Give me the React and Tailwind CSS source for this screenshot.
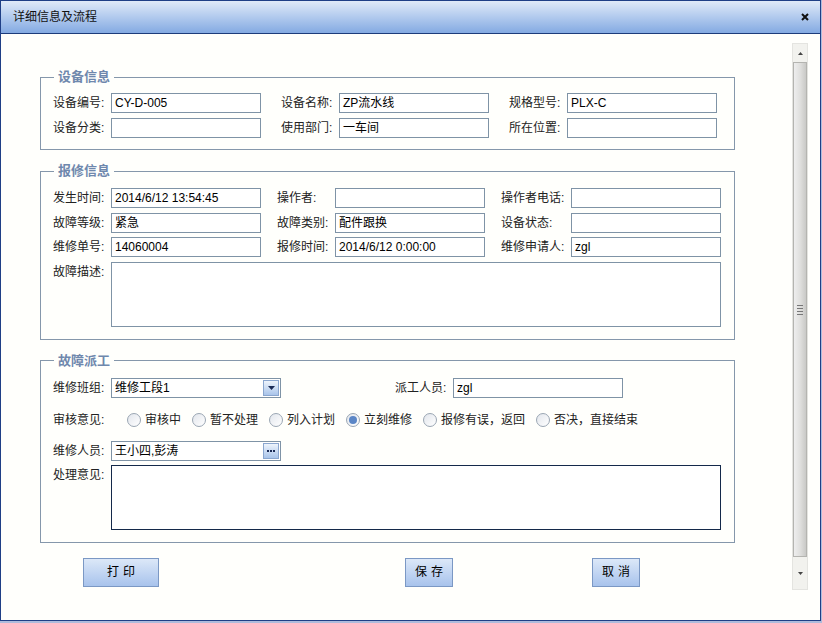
import React from 'react'

const font = { fontFamily: '"Liberation Sans","Noto Sans CJK SC",sans-serif' }

function Label({ w, children }) {
  return <div className={`shrink-0 text-[12px] text-[#222] leading-[20px]`} style={{ width: w }}>{children}</div>
}

function Input({ value = '', w = 150 }) {
  return (
    <div className="h-[20px] border border-[#7f93a6] bg-white px-[3px] text-[12px] leading-[18px] text-black shrink-0" style={{ width: w }}>
      {value}
    </div>
  )
}

function Field({ label, lw, value, iw }) {
  return (
    <div className="flex items-center">
      <Label w={lw}>{label}</Label>
      <Input value={value} w={iw} />
    </div>
  )
}

function Section({ title, children, className = '' }) {
  return (
    <fieldset className={`w-[695px] border border-[#8597ab] pl-[12px] ${className}`}>
      <legend className="ml-[1px] px-[4px] text-[13px] leading-[16px] font-bold text-[#6f88ad]">{title}</legend>
      {children}
    </fieldset>
  )
}

function Combo({ value, dots }) {
  return (
    <div className="flex h-[20px] w-[170px] border border-[#7f93a6] bg-white">
      <div className="flex-1 px-[3px] text-[12px] leading-[18px] text-black">{value}</div>
      <div className="m-[1px] flex h-[16px] w-[16px] items-center justify-center border border-[#8aa6cf] bg-gradient-to-b from-[#eef4fc] to-[#a9c4ea]">
        {dots ? (
          <div className="flex gap-[1px]">
            <span className="h-[2px] w-[2px] bg-[#1a2a55]" />
            <span className="h-[2px] w-[2px] bg-[#1a2a55]" />
            <span className="h-[2px] w-[2px] bg-[#1a2a55]" />
          </div>
        ) : (
          <svg width="7" height="4" viewBox="0 0 7 4"><path d="M0 0h7L3.5 4z" fill="#1a2a55" /></svg>
        )}
      </div>
    </div>
  )
}

function Radio({ label, checked }) {
  return (
    <div className="flex items-center gap-[4px] mr-[11px]">
      <div className="flex h-[14px] w-[14px] items-center justify-center rounded-full border border-[#9aa6b3] bg-gradient-to-br from-[#e2e6ec] to-white">
        {checked && <div className="h-[8px] w-[8px] rounded-full bg-[#5b86c6]" />}
      </div>
      <span className="text-[12px] text-[#222]">{label}</span>
    </div>
  )
}

function Btn({ children, w }) {
  return (
    <div className="flex h-[29px] items-center justify-center border border-[#7b98c4] bg-gradient-to-b from-[#dce8f8] to-[#a8c3ec] text-[12px] tracking-[4px] text-black pl-[4px]" style={{ width: w }}>
      {children}
    </div>
  )
}

export default function App() {
  return (
    <div className="h-[623px] w-[822px] bg-[#aebbdc]" style={font}>
      <div className="flex h-[621px] w-[821px] flex-col border border-[#1f3f86] bg-[#fffffc]">
        <div className="flex h-[33px] items-center justify-between border-b border-[#1c3b7a] bg-gradient-to-b from-[#e0eaf8] to-[#84aae2] pl-[12px] pr-[11px]">
          <span className="text-[12px] text-[#111]">详细信息及流程</span>
          <svg width="8" height="8" viewBox="0 0 8 8"><path d="M1 1l6 6M7 1L1 7" stroke="#111" strokeWidth="2" /></svg>
        </div>
        <div className="flex flex-1">
          <div className="flex-1 pl-[39px] pt-[35px]">
            <Section title="设备信息" className="pb-[11px]">
              <div className="flex flex-col gap-[5px] pt-[8px]">
                <div className="flex gap-[20px]">
                  <Field label="设备编号:" lw={58} value="CY-D-005" iw={150} />
                  <Field label="设备名称:" lw={58} value="ZP流水线" iw={150} />
                  <Field label="规格型号:" lw={58} value="PLX-C" iw={150} />
                </div>
                <div className="flex gap-[20px]">
                  <Field label="设备分类:" lw={58} value="" iw={150} />
                  <Field label="使用部门:" lw={58} value="一车间" iw={150} />
                  <Field label="所在位置:" lw={58} value="" iw={150} />
                </div>
              </div>
            </Section>
            <Section title="报修信息" className="mt-[13px] pb-[12px]">
              <div className="flex flex-col gap-[4.5px] pt-[9px]">
                <div className="flex gap-[16px]">
                  <Field label="发生时间:" lw={58} value="2014/6/12 13:54:45" iw={150} />
                  <Field label="操作者:" lw={58} value="" iw={150} />
                  <Field label="操作者电话:" lw={70} value="" iw={150} />
                </div>
                <div className="flex gap-[16px]">
                  <Field label="故障等级:" lw={58} value="紧急" iw={150} />
                  <Field label="故障类别:" lw={58} value="配件跟换" iw={150} />
                  <Field label="设备状态:" lw={70} value="" iw={150} />
                </div>
                <div className="flex gap-[16px]">
                  <Field label="维修单号:" lw={58} value="14060004" iw={150} />
                  <Field label="报修时间:" lw={58} value="2014/6/12 0:00:00" iw={150} />
                  <Field label="维修申请人:" lw={70} value="zgl" iw={150} />
                </div>
                <div className="flex">
                  <Label w={58}>故障描述:</Label>
                  <div className="h-[65px] w-[610px] border border-[#7f93a6] bg-white" />
                </div>
              </div>
            </Section>
            <Section title="故障派工" className="mt-[13px] pb-[12px]">
              <div className="flex flex-col pt-[9px]">
                <div className="flex items-center">
                  <Label w={58}>维修班组:</Label>
                  <Combo value="维修工段1" />
                  <div className="ml-[114px] flex items-center">
                    <Label w={58}>派工人员:</Label>
                    <Input value="zgl" w={170} />
                  </div>
                </div>
                <div className="flex h-[43px] items-center pt-[2px]">
                  <Label w={74}>审核意见:</Label>
                  <Radio label="审核中" />
                  <Radio label="暂不处理" />
                  <Radio label="列入计划" />
                  <Radio label="立刻维修" checked />
                  <Radio label="报修有误，返回" />
                  <Radio label="否决，直接结束" />
                </div>
                <div className="flex items-center">
                  <Label w={58}>维修人员:</Label>
                  <Combo value="王小四,彭涛" dots />
                </div>
                <div className="mt-[4px] flex">
                  <Label w={58}>处理意见:</Label>
                  <div className="h-[65px] w-[610px] border border-[#14294a] bg-white" />
                </div>
              </div>
            </Section>
            <div className="mt-[15px] flex">
              <div className="ml-[43px]"><Btn w={76}>打印</Btn></div>
              <div className="ml-[246px]"><Btn w={48}>保存</Btn></div>
              <div className="ml-[139px]"><Btn w={48}>取消</Btn></div>
            </div>
          </div>
          <div className="mr-[12px] mt-[9px] flex h-[547px] w-[16px] flex-col border border-[#e4e4e0] bg-[#f2f2ee]">
            <div className="flex h-[18px] items-center justify-center">
              <svg width="5" height="3" viewBox="0 0 5 3"><path d="M0 3h5L2.5 0z" fill="#444" /></svg>
            </div>
            <div className="flex flex-1 items-center justify-center border border-[#b4b4b0] bg-gradient-to-r from-[#eeeeee] via-[#e0e0de] to-[#c9c9c6]">
              <div className="flex flex-col gap-[2px]">
                <span className="h-px w-[6px] bg-[#777]" />
                <span className="h-px w-[6px] bg-[#777]" />
                <span className="h-px w-[6px] bg-[#777]" />
                <span className="h-px w-[6px] bg-[#777]" />
              </div>
            </div>
            <div className="flex h-[32px] items-center justify-center">
              <svg width="5" height="3" viewBox="0 0 5 3"><path d="M0 0h5L2.5 3z" fill="#444" /></svg>
            </div>
          </div>
        </div>
      </div>
    </div>
  )
}
